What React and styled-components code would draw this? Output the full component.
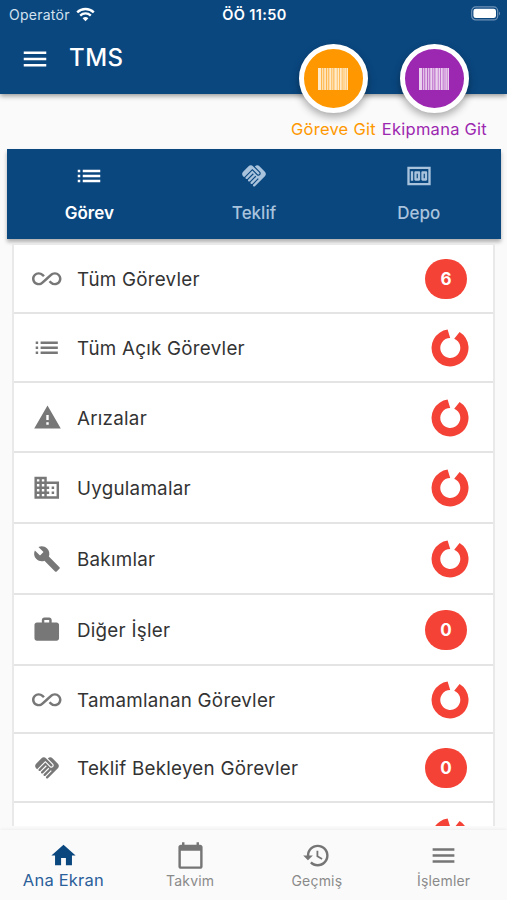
import React, { useState } from "react";
import styled, { createGlobalStyle } from "styled-components";
import {
  MdMenu,
  MdList,
  MdHandshake,
  MdMoney,
  MdAllInclusive,
  MdWarning,
  MdBusiness,
  MdBuild,
  MdWork,
  MdHome,
  MdCalendarToday,
  MdHistory,
} from "react-icons/md";

const GlobalStyle = createGlobalStyle`
  * {
    box-sizing: border-box;
  }

  body {
    margin: 0;
    background: #fafafa;
    font-family: Inter, "Liberation Sans", sans-serif;
  }

  svg {
    display: block;
    flex-shrink: 0;
  }
`;

const Screen = styled.div`
  position: relative;
  width: 507px;
  height: 900px;
  display: flex;
  flex-direction: column;
  background: #fafafa;
  overflow: hidden;
`;

const Header = styled.header`
  height: 94px;
  flex-shrink: 0;
  background: #0a477f;
  color: #ffffff;
  box-shadow: 0 2px 5px #00000066;
`;

const StatusBar = styled.div`
  height: 28px;
  padding: 0 7px 0 9px;
  display: grid;
  grid-template-columns: 1fr auto 1fr;
  align-items: center;

  .carrier {
    display: flex;
    align-items: center;
    gap: 6px;
    font-size: 14px;
    letter-spacing: 0.25px;
    color: #d3e2f0;
  }

  .time {
    font-size: 14.5px;
    font-weight: 600;
    letter-spacing: 0.35px;
  }

  .battery {
    justify-self: end;
    margin: -2px -1px 0 0;
  }
`;

const TitleBar = styled.div`
  height: 62px;
  padding: 0 20px;
  display: flex;
  align-items: center;
  gap: 19px;

  .logo {
    font-size: 24px;
    font-weight: 500;
    margin-top: -4px;
    letter-spacing: 0.5px;
  }
`;

const ScanButtons = styled.div`
  position: absolute;
  top: 44px;
  right: 20px;
  display: flex;
  gap: 6px;
`;

const ScanButton = styled.div`
  display: flex;
  flex-direction: column;
  align-items: center;
  color: ${(props) => props.$color};
  font-size: 16.5px;
  letter-spacing: 0.25px;
  line-height: 20px;
  white-space: nowrap;

  .circle {
    width: 69px;
    height: 69px;
    margin-bottom: 6px;
    display: flex;
    align-items: center;
    justify-content: center;
    border: 5px solid #ffffff;
    border-radius: 50%;
    background: ${(props) => props.$color};
    box-shadow: 0 4px 8px #00000055;
  }
`;

const TabBar = styled.nav`
  height: 90px;
  margin: 55px 6px 0 7px;
  flex-shrink: 0;
  display: flex;
  background: #0a477f;
  box-shadow: 0 3px 4px #0000004d;
`;

const Tab = styled.div`
  flex: 1;
  padding-top: 12px;
  display: flex;
  flex-direction: column;
  align-items: center;
  color: ${(props) => (props.$active ? "#ffffff" : "#a9c3dd")};
  font-size: 17px;
  font-weight: ${(props) => (props.$active ? 600 : 500)};
  line-height: 20px;
  cursor: pointer;

  .icon {
    height: 30px;
    margin-bottom: 12px;
    display: flex;
    align-items: center;
  }
`;

const List = styled.div`
  flex: 1;
  min-height: 0;
  margin: 5px 12px 4px 12px;
  border: solid #e9e9e9;
  border-width: 1px 2px 0 2px;
  background: #ffffff;
  overflow: hidden;
`;

const Row = styled.div`
  height: ${(props) => props.$height}px;
  padding: 1px 24px 0 18px;
  display: flex;
  align-items: center;
  border-bottom: 2px solid #e4e4e4;
  color: #777777;

  .icon {
    width: 30px;
    display: flex;
    justify-content: center;
  }

  .label {
    flex: 1;
    margin: 1px 0 0 15px;
    color: #333333;
    font-size: 18.8px;
    letter-spacing: 0.25px;
  }
`;

const Badge = styled.span`
  width: 42px;
  height: 40px;
  margin-right: 2px;
  display: flex;
  align-items: center;
  justify-content: center;
  border-radius: 20px;
  background: #f44336;
  color: #ffffff;
  font-size: 17px;
  font-weight: 700;
`;

const BottomNav = styled.nav`
  height: 70px;
  flex-shrink: 0;
  display: flex;
  background: #fafafa;
  box-shadow: 0 0 4px #00000014;
`;

const NavItem = styled.div`
  flex: 1;
  padding-top: 11px;
  display: flex;
  flex-direction: column;
  align-items: center;
  color: ${(props) => (props.$active ? "#0a477f" : "#757575")};

  .label {
    margin-top: ${(props) => (props.$active ? 0 : 1)}px;
    color: ${(props) => (props.$active ? "#2a609a" : "#8a8a8a")};
    font-size: ${(props) => (props.$active ? 16.5 : 14)}px;
    letter-spacing: 0.2px;
    line-height: 20px;
  }
`;

const tabs = [
  { name: "Görev", icon: MdList },
  { name: "Teklif", icon: MdHandshake, size: 28 },
  { name: "Depo", icon: MdMoney, size: 28 },
];

const rows = [
  { name: "Tüm Görevler", icon: MdAllInclusive, count: 6, height: 69 },
  { name: "Tüm Açık Görevler", icon: MdList, height: 69 },
  { name: "Arızalar", icon: MdWarning, size: 29, height: 70 },
  { name: "Uygulamalar", icon: MdBusiness, height: 71 },
  { name: "Bakımlar", icon: MdBuild, size: 28, height: 71 },
  { name: "Diğer İşler", icon: MdWork, count: 0, height: 71 },
  { name: "Tamamlanan Görevler", icon: MdAllInclusive, height: 68 },
  {
    name: "Teklif Bekleyen Görevler",
    icon: MdHandshake,
    size: 28,
    count: 0,
    height: 69,
  },
  { name: "", height: 69 },
];

const navItems = [
  { name: "Ana Ekran", icon: MdHome },
  { name: "Takvim", icon: MdCalendarToday },
  { name: "Geçmiş", icon: MdHistory },
  { name: "İşlemler", icon: MdMenu },
];

// [x, width] of every bar
const bars = [
  [0, 3], [4.2, 1], [6.3, 1.6], [9.2, 1], [11.3, 2], [14.3, 1],
  [16.4, 2.4], [19.6, 1.4], [21.9, 1.8], [24.6, 1], [26.4, 1.4], [28.6, 1.4],
];

function Barcode() {
  return (
    <svg width="30" height="22" viewBox="0 0 30 22" fill="#ffffff">
      <rect width="30" height="22" opacity="0.3" />
      {bars.map(([x, w]) => (
        <rect key={x} x={x} width={w} height="22" opacity="0.7" />
      ))}
    </svg>
  );
}

function Spinner() {
  return (
    <svg width="38" height="38" viewBox="-19 -19 38 38" fill="#f44336">
      <path d="M9.6 -15.9A18.5 18.5 0 1 1 -2.4 -18.4L0.2 -10.1A10 10 0 1 0 4.2 -9.3Z" />
    </svg>
  );
}

function Wifi() {
  return (
    <svg width="19" height="15" viewBox="0 0 19 15" fill="none" stroke="#ffffff">
      <path d="M1.2 5.3a12 12 0 0 1 16.6 0" strokeWidth="2.4" />
      <path d="M4.2 8.6a7.6 7.6 0 0 1 10.6 0" strokeWidth="2.3" />
      <path d="M9.5 14.3L6.6 11.2a4.3 4.3 0 0 1 5.8 0z" fill="#ffffff" stroke="none" />
    </svg>
  );
}

function Battery() {
  return (
    <svg className="battery" width="30" height="15" viewBox="0 0 30 15">
      <rect x="0.7" y="0.9" width="26" height="13" rx="4" fill="none" stroke="#6f93b6" strokeWidth="1.2" />
      <rect x="2.4" y="2.7" width="22.6" height="9.4" rx="2.4" fill="#ffffff" />
      <path d="M28 5.4q2 2 0 4z" fill="#6f93b6" />
    </svg>
  );
}

function App() {
  const [tab, setTab] = useState(0);

  return (
    <Screen>
      <GlobalStyle />
      <Header>
        <StatusBar>
          <span className="carrier">
            Operatör <Wifi />
          </span>
          <span className="time">ÖÖ 11:50</span>
          <Battery />
        </StatusBar>
        <TitleBar>
          <MdMenu size={30} />
          <span className="logo">TMS</span>
        </TitleBar>
      </Header>

      <ScanButtons>
        <ScanButton $color="#ff9800">
          <div className="circle">
            <Barcode />
          </div>
          Göreve Git
        </ScanButton>
        <ScanButton $color="#9c27b0">
          <div className="circle">
            <Barcode />
          </div>
          Ekipmana Git
        </ScanButton>
      </ScanButtons>

      <TabBar>
        {tabs.map(({ name, icon: Icon, size = 30 }, i) => (
          <Tab key={name} $active={tab === i} onClick={() => setTab(i)}>
            <span className="icon">
              <Icon size={size} />
            </span>
            {name}
          </Tab>
        ))}
      </TabBar>

      <List>
        {rows.map(({ name, icon: Icon, size = 29.5, count, height }) => (
          <Row key={name} $height={height}>
            <span className="icon">{Icon && <Icon size={size} />}</span>
            <span className="label">{name}</span>
            {count !== undefined ? <Badge>{count}</Badge> : <Spinner />}
          </Row>
        ))}
      </List>

      <BottomNav>
        {navItems.map(({ name, icon: Icon }, i) => (
          <NavItem key={name} $active={i === 0}>
            <Icon size={29} />
            <span className="label">{name}</span>
          </NavItem>
        ))}
      </BottomNav>
    </Screen>
  );
}

export default App;
